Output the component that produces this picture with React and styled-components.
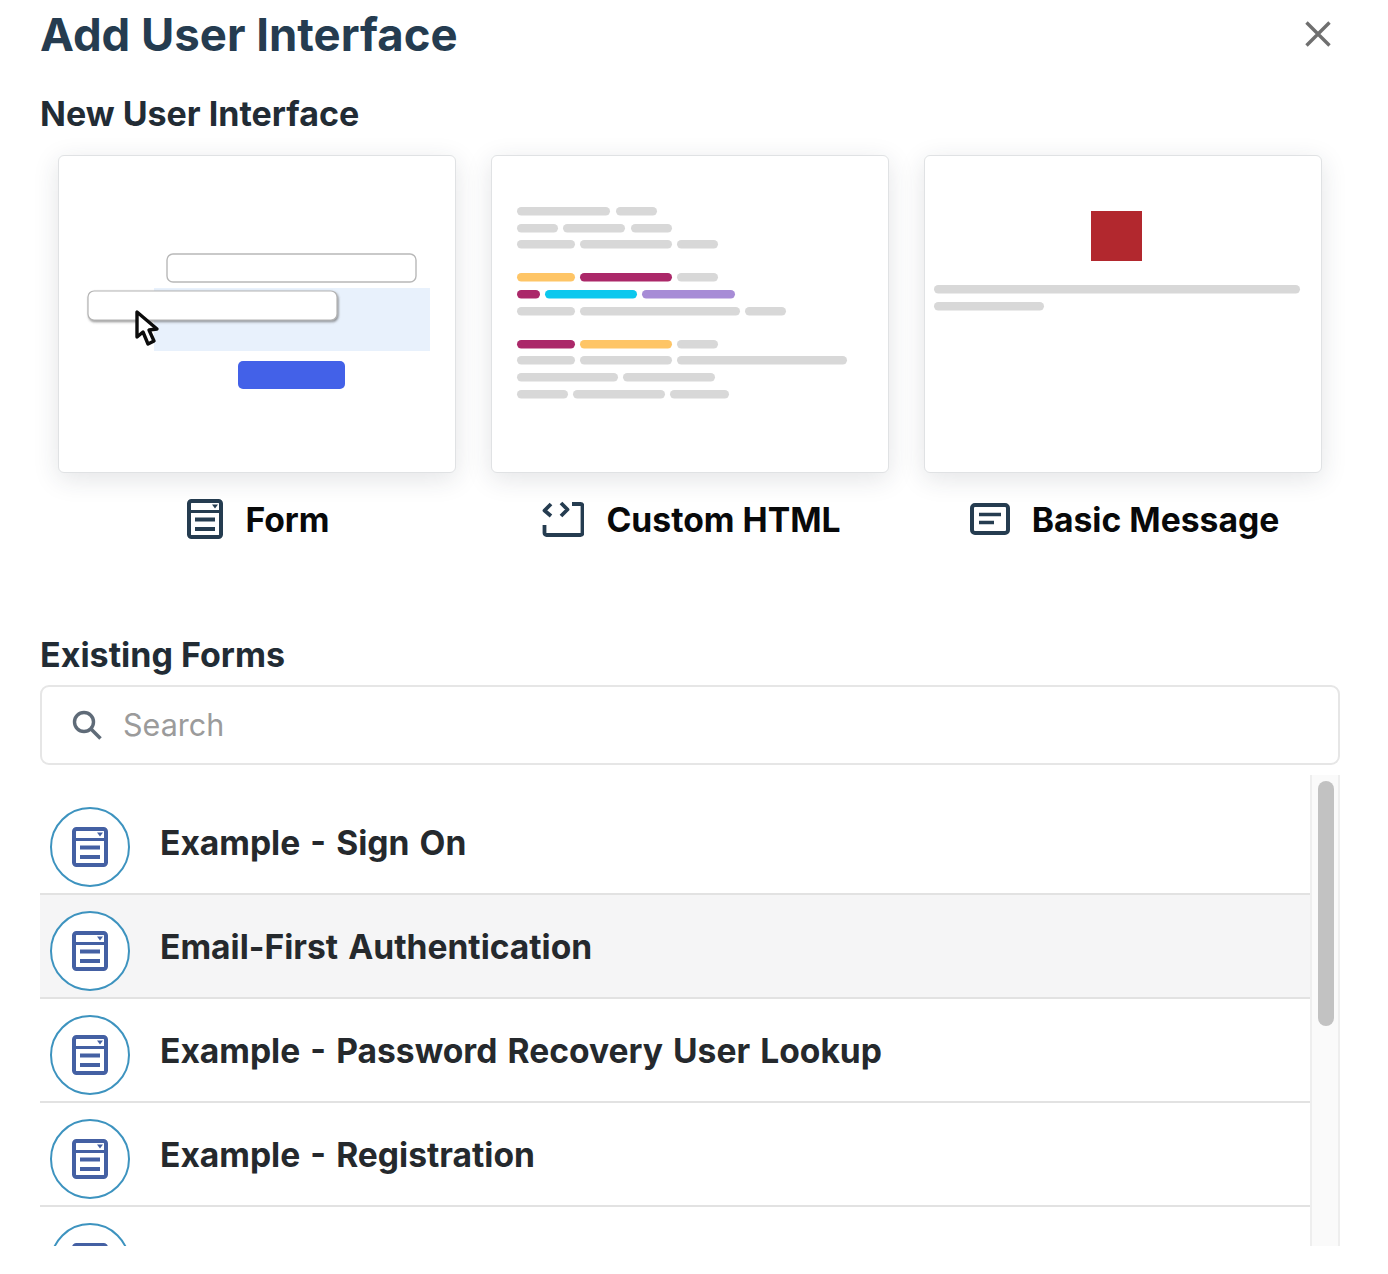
import React from "react";
import styled, { createGlobalStyle } from "styled-components";

const GlobalStyle = createGlobalStyle`
  html, body {
    margin: 0;
    padding: 0;
    background: #ffffff;
    font-family: Inter, "Liberation Sans", sans-serif;
  }
`;

const INK = "#253c50";
const FORM_BLUE = "#4460a3";

const gray = "#d8d8d8";
const amber = "#fec566";
const plum = "#ab2869";
const cyan = "#0cc8ee";
const violet = "#a78cd6";

// x, width, colour per bar, grouped by line
const codeLines = [
  { y: 207, bars: [[517, 93], [616, 41]] },
  { y: 224, bars: [[517, 41], [563, 62], [631, 41]] },
  { y: 240, bars: [[517, 58], [580, 92], [677, 41]] },
  { y: 273, bars: [[517, 58, amber], [580, 92, plum], [677, 41]] },
  { y: 290, bars: [[517, 23, plum], [545, 92, cyan], [642, 93, violet]] },
  { y: 307, bars: [[517, 58], [580, 160], [745, 41]] },
  { y: 340, bars: [[517, 58, plum], [580, 92, amber], [677, 41]] },
  { y: 356, bars: [[517, 58], [580, 92], [677, 170]] },
  { y: 373, bars: [[517, 101], [623, 92]] },
  { y: 390, bars: [[517, 51], [573, 92], [670, 59]] },
];

const forms = [
  "Example - Sign On",
  "Email-First Authentication",
  "Example - Password Recovery User Lookup",
  "Example - Registration",
  "Select Password",
];

function FormGlyph({ size, color }) {
  return (
    <svg width={size * 0.9} height={size} viewBox="0 0 36 40" fill="none">
      <rect x="2" y="2" width="32" height="36" rx="2.5" stroke={color} strokeWidth="4" />
      <path d="M3 12.5h30" stroke={color} strokeWidth="3" />
      <path d="M25 5.5h6l-3 4z" fill={color} />
      <path d="M8 20.5h20M8 30h20" stroke={color} strokeWidth="4" />
    </svg>
  );
}

function CodeGlyph() {
  return (
    <svg width="42" height="36" viewBox="0 0 42 36" fill="none" stroke={INK} strokeWidth="3.8">
      <path d="M9 3L2.5 9.5 9 15M19 2l6.5 6.5L19 15" strokeLinejoin="round" />
      <path d="M30 3h8.5a2 2 0 0 1 2 2v27a2 2 0 0 1-2 2H4.5a2 2 0 0 1-2-2v-8" />
    </svg>
  );
}

function MessageGlyph() {
  return (
    <svg width="40" height="32" viewBox="0 0 40 32" fill="none" stroke={INK}>
      <rect x="2" y="2" width="36" height="28" rx="3" strokeWidth="4" />
      <path d="M9 11.5h22M9 19.5h15" strokeWidth="3.4" />
    </svg>
  );
}

function FormPreview() {
  return (
    <PreviewSvg viewBox="59 156 396 316">
      <defs>
        <filter id="inputShadow" x="-5%" y="-30%" width="110%" height="170%">
          <feDropShadow dx="1" dy="1.5" stdDeviation="1" floodColor="#555" floodOpacity="0.65" />
        </filter>
      </defs>
      <rect x="154" y="288" width="276" height="63" fill="#e8f1fc" />
      <rect x="167" y="254" width="249" height="28" rx="6" fill="#fff" stroke="#b8b8b8" strokeWidth="1.4" />
      <rect x="88" y="291" width="249" height="29" rx="6" fill="#fff" stroke="#b4b4b4" strokeWidth="1.2" filter="url(#inputShadow)" />
      <rect x="238" y="361" width="107" height="28" rx="5" fill="#4361e8" />
      <path
        d="M137 312l0 25 6-5 5 12 6-3-5-11 8-1z"
        fill="#fff"
        stroke="#0c0c0c"
        strokeWidth="3.4"
        strokeLinejoin="round"
      />
    </PreviewSvg>
  );
}

function CodePreview() {
  return (
    <PreviewSvg viewBox="492 156 396 316">
      {codeLines.map((line) =>
        line.bars.map(([x, w, fill]) => (
          <rect key={`${line.y}-${x}`} x={x} y={line.y} width={w} height="8.5" rx="4.2" fill={fill || gray} />
        ))
      )}
    </PreviewSvg>
  );
}

function MessagePreview() {
  return (
    <PreviewSvg viewBox="925 156 396 316">
      <rect x="1091" y="211" width="51" height="50" fill="#b2282e" />
      <rect x="934" y="285" width="366" height="8.5" rx="4.2" fill={gray} />
      <rect x="934" y="302" width="110" height="8.5" rx="4.2" fill={gray} />
    </PreviewSvg>
  );
}

export default function App() {
  return (
    <Page>
      <GlobalStyle />
      <Header>
        <Title>Add User Interface</Title>
        <CloseButton aria-label="Close">
          <svg width="28" height="28" viewBox="0 0 28 28" stroke="#6f6f6f" strokeWidth="3.4">
            <path d="M2.5 2.5l23 23M25.5 2.5l-23 23" />
          </svg>
        </CloseButton>
      </Header>

      <SectionTitle>New User Interface</SectionTitle>
      <Templates>
        <Template>
          <PreviewCard>
            <FormPreview />
          </PreviewCard>
          <TemplateLabel>
            <FormGlyph size={40} color={INK} />
            Form
          </TemplateLabel>
        </Template>
        <Template>
          <PreviewCard>
            <CodePreview />
          </PreviewCard>
          <TemplateLabel>
            <CodeGlyph />
            Custom HTML
          </TemplateLabel>
        </Template>
        <Template>
          <PreviewCard>
            <MessagePreview />
          </PreviewCard>
          <TemplateLabel>
            <MessageGlyph />
            Basic Message
          </TemplateLabel>
        </Template>
      </Templates>

      <ExistingTitle>Existing Forms</ExistingTitle>
      <SearchBox>
        <svg width="32" height="32" viewBox="0 0 32 32" fill="none" stroke="#5f6b78">
          <circle cx="13" cy="13" r="9.5" strokeWidth="3.4" />
          <path d="M20 20l9.5 9.5" strokeWidth="3.6" />
        </svg>
        <SearchInput placeholder="Search" />
      </SearchBox>

      <ListArea>
        <FormList>
          {forms.map((name, i) => (
            <FormRow key={name} $active={i === 1}>
              <FormBadge>
                <FormGlyph size={40} color={FORM_BLUE} />
              </FormBadge>
              <FormName>{name}</FormName>
            </FormRow>
          ))}
        </FormList>
        <ScrollTrack>
          <ScrollThumb />
        </ScrollTrack>
      </ListArea>
    </Page>
  );
}

const Page = styled.div`
  box-sizing: border-box;
  width: 1388px;
  height: 1274px;
  padding: 0 48px 0 40px;
  background: #ffffff;
  overflow: hidden;
`;

const Header = styled.div`
  display: flex;
  align-items: center;
  justify-content: space-between;
  height: 70px;
`;

const Title = styled.h1`
  margin: 0;
  font-size: 45.5px;
  font-weight: 700;
  line-height: 70px;
  color: ${INK};
`;

const CloseButton = styled.button`
  display: flex;
  padding: 0;
  margin: 0 8px 2px 0;
  border: 0;
  background: none;
`;

const SectionTitle = styled.h2`
  margin: 23px 0 0;
  height: 43px;
  font-size: 34px;
  font-weight: 700;
  line-height: 42px;
  color: #222c35;
`;

const ExistingTitle = styled(SectionTitle)`
  margin-top: 92px;
`;

const Templates = styled.div`
  display: grid;
  grid-template-columns: repeat(3, 398px);
  column-gap: 35px;
  margin: 19px 0 0 18px;
`;

const Template = styled.div`
  display: flex;
  flex-direction: column;
`;

const PreviewCard = styled.div`
  box-sizing: border-box;
  height: 318px;
  border: 1.5px solid #e0e2e4;
  border-radius: 6px;
  background: #ffffff;
  box-shadow: 0 6px 26px rgba(40, 50, 60, 0.13);
  overflow: hidden;
`;

const PreviewSvg = styled.svg`
  display: block;
  width: 100%;
  height: 100%;
`;

const TemplateLabel = styled.div`
  display: flex;
  align-items: center;
  justify-content: center;
  gap: 22px;
  height: 46px;
  margin-top: 23px;
  padding-left: 3px;
  font-size: 33.7px;
  font-weight: 700;
  color: #08090a;
`;

const SearchBox = styled.div`
  box-sizing: border-box;
  display: flex;
  align-items: center;
  gap: 20px;
  height: 80px;
  margin-top: 8px;
  padding: 0 30px 0 29px;
  border: 2px solid #e6e6e6;
  border-radius: 9px;
`;

const SearchInput = styled.input`
  flex: 1;
  min-width: 0;
  margin-bottom: 2px;
  padding: 0;
  border: 0;
  outline: none;
  background: transparent;
  font-family: Inter, "Liberation Sans", sans-serif;
  font-size: 30.5px;
  color: #333;

  &::placeholder {
    color: #9b9b9b;
    opacity: 1;
  }
`;

const ListArea = styled.div`
  display: flex;
  height: 471px;
  margin-top: 10px;
  overflow: hidden;
`;

const FormList = styled.div`
  flex: 1;
  min-width: 0;
  padding-top: 16px;
`;

const FormRow = styled.div`
  box-sizing: border-box;
  display: flex;
  align-items: center;
  gap: 30px;
  height: 104px;
  padding: 0 0 0 10px;
  border-bottom: 2px solid #e2e2e2;
  background: ${(props) => (props.$active ? "#f5f5f6" : "#ffffff")};
`;

const FormBadge = styled.div`
  box-sizing: border-box;
  display: flex;
  align-items: center;
  justify-content: center;
  flex: none;
  width: 80px;
  height: 80px;
  margin-top: 10px;
  border: 2px solid #3d93bf;
  border-radius: 50%;
  background: #ffffff;
`;

const FormName = styled.div`
  font-size: 33.6px;
  font-weight: 700;
  word-spacing: 2.2px;
  color: #25292d;
`;

const ScrollTrack = styled.div`
  box-sizing: border-box;
  flex: none;
  width: 30px;
  padding: 6px 4px 0 6px;
  border: solid #eeeeee;
  border-width: 0 2px;
  background: #fafafa;
`;

const ScrollThumb = styled.div`
  width: 16px;
  height: 245px;
  border-radius: 8px;
  background: #c2c2c2;
`;
